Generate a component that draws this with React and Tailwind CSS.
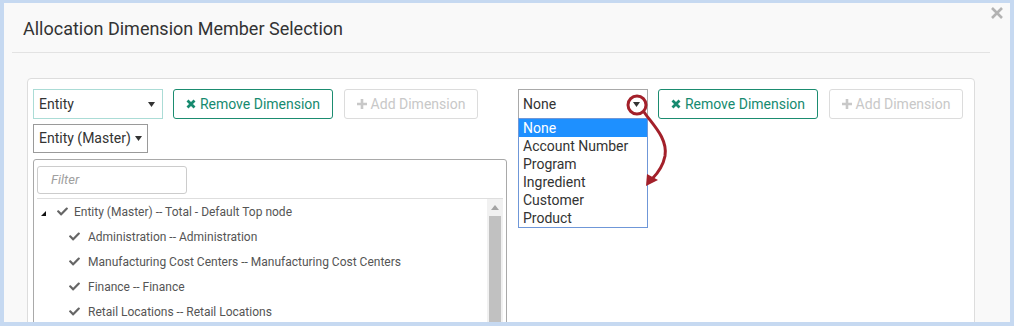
import React from 'react';
import { FaCheck } from 'react-icons/fa';

const Caret = ({ className = '' }) => (
  <svg width="7" height="5" viewBox="0 0 7 5" className={className}>
    <polygon points="0,0 7,0 3.5,5" fill="#333" />
  </svg>
);

const RemoveButton = () => (
  <button className="h-[30px] w-[160px] shrink-0 rounded-[3px] border border-[#1b8c70] bg-white flex items-center justify-center gap-[4px] text-[14px] text-[#168a6f]">
    <svg width="10" height="10" viewBox="0 0 10 10">
      <path d="M1.5 1.5 L8.5 8.5 M8.5 1.5 L1.5 8.5" stroke="currentColor" strokeWidth="2.8" />
    </svg>
    <span>Remove Dimension</span>
  </button>
);

const AddButton = () => (
  <button className="h-[30px] w-[134px] shrink-0 rounded-[3px] border border-[#dcdcdc] bg-white flex items-center justify-center gap-[4px] text-[14px] text-[#c8c8c8]">
    <svg width="10" height="10" viewBox="0 0 10 10">
      <path d="M5 0 L5 10 M0 5 L10 5" stroke="currentColor" strokeWidth="2.6" />
    </svg>
    <span>Add Dimension</span>
  </button>
);

const TreeRow = ({ label, root }) => (
  <div className="h-[25px] shrink-0 flex items-center text-[12px] text-[#555]">
    {root ? (
      <>
        <svg width="5" height="5" viewBox="0 0 5 5" className="ml-[4px] mt-[3px]">
          <polygon points="5,0 5,5 0,5" fill="#111" />
        </svg>
        <FaCheck size={11} className="ml-[11px] text-[#666]" />
        <span className="ml-[6px]">{label}</span>
      </>
    ) : (
      <>
        <FaCheck size={11} className="ml-[32px] text-[#666]" />
        <span className="ml-[8px]">{label}</span>
      </>
    )}
  </div>
);

const options = ['None', 'Account Number', 'Program', 'Ingredient', 'Customer', 'Product'];

export default function App() {
  return (
    <div className="relative w-[1014px] h-[326px] overflow-hidden bg-[#c6d9f1] pt-[3px] px-[4px] font-['Roboto',sans-serif]">
      <div className="relative h-[319px] overflow-hidden bg-[#f9f9f9]">
        <svg width="12" height="12" viewBox="0 0 12 12" className="absolute left-[987px] top-[4px]">
          <path d="M1 1 L11 11 M11 1 L1 11" stroke="#b3b3b3" strokeWidth="2.6" />
        </svg>
        <div className="pt-[15px] pl-[19px] text-[18px] leading-[21px] text-[#333]">
          Allocation Dimension Member Selection
        </div>
        <div className="mt-[13px] ml-[8px] w-[978px] h-px bg-[#e3e3e3]" />

        <div className="mt-[25px] ml-[23px] w-[948px] h-[260px] rounded-[4px] border border-[#dddddd] bg-white pl-[5px] pt-[10px] flex gap-[11px]">
          {/* left dimension */}
          <div className="w-[474px] flex flex-col">
            <div className="shrink-0 flex items-center gap-[10px]">
              <div className="h-[30px] w-[130px] shrink-0 border border-[#abdcd6] flex items-center justify-between pl-[5px] pr-[7px] text-[14px] text-[#333]">
                <span>Entity</span>
                <Caret />
              </div>
              <RemoveButton />
              <div className="ml-px">
                <AddButton />
              </div>
            </div>
            <div className="mt-[5px] h-[29px] w-[115px] shrink-0 border border-[#9a9a9a] flex items-center pl-[5px] gap-[4px] text-[14px] text-[#333]">
              <span>Entity (Master)</span>
              <Caret />
            </div>
            <div className="mt-[6px] h-[200px] shrink-0 rounded-t-[3px] border border-[#a9a9a9] px-[3px] pt-[6px]">
              <div className="h-[28px] w-[150px] rounded-[3px] border border-[#cccccc] flex items-center pl-[13px] text-[13px] italic text-[#a0a0a0]">
                Filter
              </div>
              <div className="mt-[4px] border-t border-[#dedede] flex">
                <div className="flex-1 flex flex-col">
                  <TreeRow root label="Entity (Master) -- Total - Default Top node" />
                  <TreeRow label="Administration -- Administration" />
                  <TreeRow label="Manufacturing Cost Centers -- Manufacturing Cost Centers" />
                  <TreeRow label="Finance -- Finance" />
                  <TreeRow label="Retail Locations -- Retail Locations" />
                </div>
                <div className="w-[16px] h-[160px] bg-[#f1f1f1] flex flex-col items-center">
                  <svg width="8" height="5" viewBox="0 0 8 5" className="mt-[6px]">
                    <polygon points="0,5 8,5 4,0" fill="#a3a3a3" />
                  </svg>
                  <div className="mt-[6px] w-[12px] flex-1 bg-[#c1c1c1]" />
                </div>
              </div>
            </div>
          </div>

          {/* right dimension */}
          <div className="relative flex items-start gap-[10px]">
            <div className="h-[30px] w-[130px] shrink-0 border border-[#a9a9a9] flex items-center justify-between pl-[4px] pr-[7px] text-[14px] text-[#333]">
              <span>None</span>
              <Caret />
            </div>
            <RemoveButton />
            <div className="ml-px">
              <AddButton />
            </div>
            <div className="absolute left-0 top-[29px] w-[130px] border border-[#6f97d8] bg-white flex flex-col text-[14px] text-[#333]">
              {options.map((o, i) => (
                <div
                  key={o}
                  className={i === 0 ? 'h-[18px] leading-[18px] pl-[4px] bg-[#1e90ff] text-white' : 'h-[18px] leading-[18px] pl-[4px]'}
                >
                  {o}
                </div>
              ))}
            </div>
          </div>
        </div>
      </div>

      {/* red annotation */}
      <svg width="1014" height="326" className="absolute left-0 top-0 pointer-events-none">
        <circle cx="637" cy="105" r="9" fill="none" stroke="#a3202a" strokeWidth="3" />
        <path d="M644 112 C652 124, 668 138, 665 156 C663 166, 657 174, 652 179" fill="none" stroke="#a3202a" strokeWidth="3" strokeLinecap="round" />
        <polygon points="646,186 647,174 658,180" fill="#a3202a" />
      </svg>
    </div>
  );
}
